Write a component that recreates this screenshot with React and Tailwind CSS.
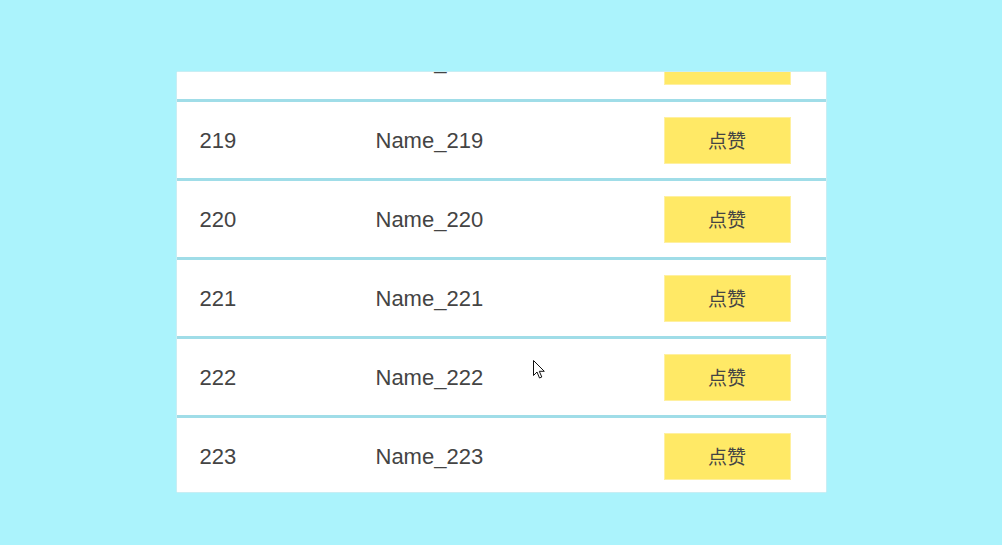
import React from 'react';

const rows = [218, 219, 220, 221, 222, 223];

function Cursor() {
  return (
    <svg className="absolute left-[533px] top-[360px] pointer-events-none" width="13" height="20" viewBox="0 0 13 20">
      <path d="M0.5 0.5 L0.5 15.5 L4 12 L6.5 18 L8.8 17 L6.3 11.3 L11.3 11.3 Z" fill="#fff" stroke="#111" strokeWidth="1" strokeLinejoin="miter" />
    </svg>
  );
}

function Row({ id }) {
  return (
    <div className="flex items-center h-[79px] bg-white border-b-[3px] border-[#a0dde8] pl-[23px]">
      <div className="w-[176px] text-[22px] text-[#444]">{id}</div>
      <div className="flex-1 text-[22px] text-[#444]">Name_{id}</div>
      <button className="w-[127px] h-[47px] mr-[35px] bg-[#ffe966] border border-[#fff0a0] text-[19px] text-[#444] font-['Noto_Sans_CJK_SC',sans-serif]">
        点赞
      </button>
    </div>
  );
}

export default function App() {
  return (
    <div className="relative w-[1002px] h-[545px] bg-[#abf3fc] overflow-hidden font-['Liberation_Sans','Noto_Sans_CJK_SC',sans-serif]">
      <div className="flex justify-center pt-[71px]">
        <div className="w-[651px] h-[422px] overflow-hidden bg-white rounded-[2px] border border-[#c8eef4]">
          <div className="-mt-[49px]">
            {rows.map(id => <Row key={id} id={id} />)}
          </div>
        </div>
      </div>
      <Cursor />
    </div>
  );
}
